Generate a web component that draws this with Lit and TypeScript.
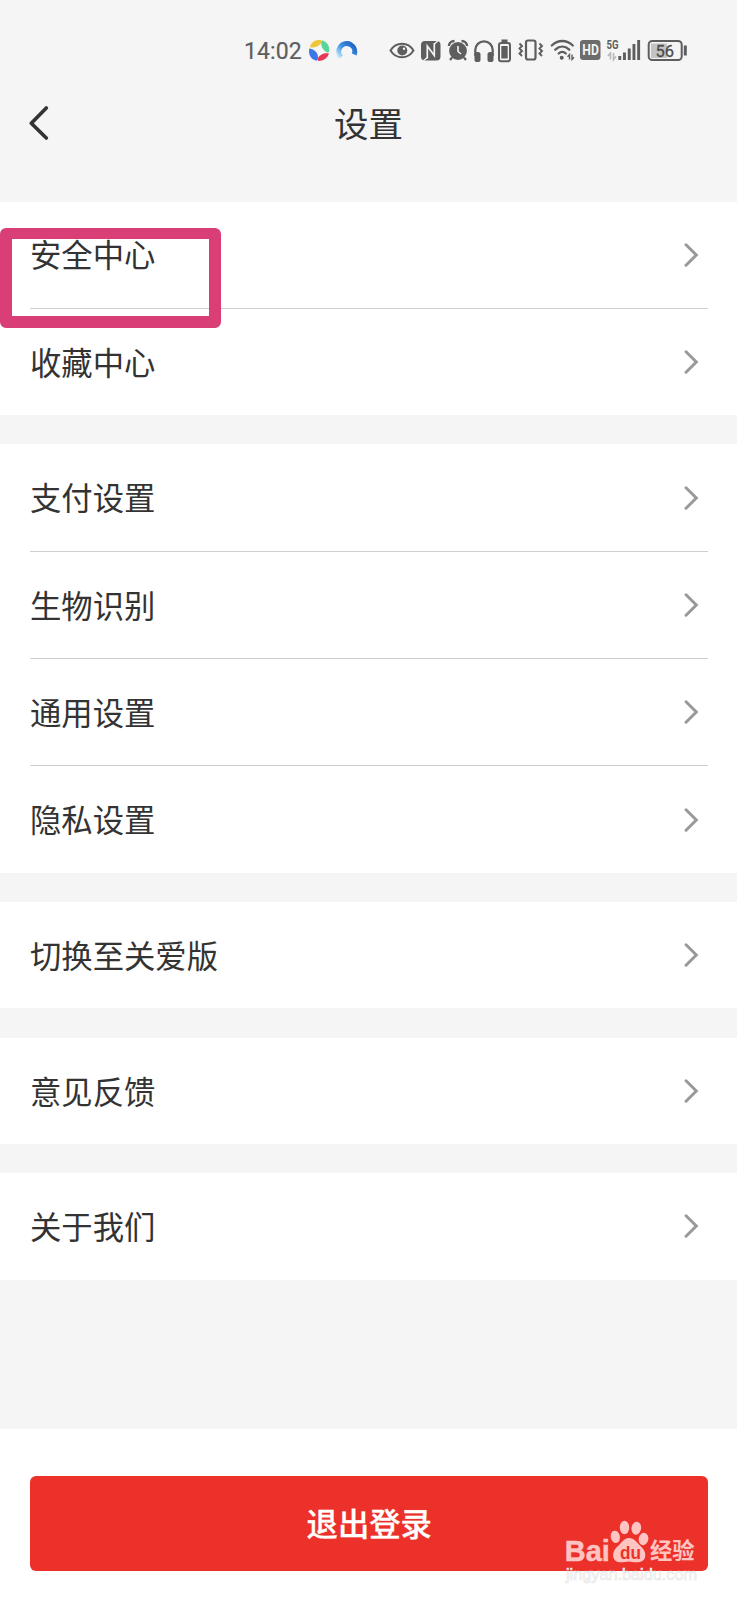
import { LitElement, html, css } from "lit";
import { customElement, property } from "lit/decorators.js";

@customElement("status-bar")
class StatusBar extends LitElement {
  static styles = css`
    :host {
      display: flex;
      box-sizing: border-box;
      height: 80px;
      padding: 30px 0 0 244px;
      color: #5e5e5e;
    }
    .time {
      width: 64px;
      font: 23px/43px Roboto, sans-serif;
      letter-spacing: 0.1px;
      -webkit-text-stroke: 0.2px #5e5e5e;
    }
    svg {
      display: block;
      flex: none;
    }
    .apps {
      margin-right: 20px;
    }
    text {
      font-family: Roboto, sans-serif;
    }
  `;
  render() {
    return html`
      <div class="time">14:02</div>
      <svg class="apps" width="52" height="45" viewBox="308 30 52 45" fill="none">
        <defs>
          <linearGradient id="ring" x1="1" y1="0.1" x2="0" y2="1">
            <stop offset="0" stop-color="#1f62c4" />
            <stop offset="0.5" stop-color="#3d92e2" />
            <stop offset="1" stop-color="#c4eafa" />
          </linearGradient>
        </defs>
        <path d="M310.300 45.500C312 41.300 316.500 39.300 321 40.100L321.600 42C319.500 46.500 314.500 48 310.300 47.500Z" fill="#efc53c" />
        <path d="M321.800 40.200C327 41.500 329.800 46 329.300 51.500L327.500 52.700C322.500 50.500 320 45 321.800 40.200Z" fill="#57d69a" />
        <path d="M329 53.500C327.500 58 323.500 61.200 318.300 60.900L317.300 59C319.500 54.500 324.500 52.500 329 53.500Z" fill="#e63958" />
        <path d="M309.300 48.500C308 54.500 311 59.500 316.500 60.700L317.700 59.500C319 54 315.500 49.500 309.300 48.500Z" fill="#3a78ea" />
        <path d="M341 57.200A8 8 0 1 1 354.200 54.500" stroke="url(#ring)" stroke-width="5" />
      </svg>
      <svg width="320" height="45" viewBox="380 30 320 45" fill="none" stroke="#5e5e5e" stroke-width="2">
        <path d="M390.500 50.500C396 41.500 408 41.500 413.500 50.500C408 59.500 396 59.500 390.500 50.500Z" />
        <circle cx="402.300" cy="50.500" r="5" fill="#5e5e5e" stroke="none" />
        <circle cx="404" cy="48.800" r="1.200" fill="#f5f5f5" stroke="none" />

        <rect x="421" y="41" width="19.500" height="19.500" rx="4" fill="#5e5e5e" stroke="none" />
        <path d="M427.300 58.500V46L434.300 55.500V43" stroke="#f5f5f5" stroke-width="1.700" />
        <path d="M427.300 57.500L423.500 60.700M434.300 44L438 40.800" stroke="#f5f5f5" stroke-width="1.300" />

        <circle cx="458" cy="51" r="8.900" fill="#5e5e5e" stroke="none" />
        <path d="M448.900 46C449 43.300 451.300 41 454.500 41M467.100 46C467 43.300 464.700 41 461.500 41" stroke-width="2.400" />
        <path d="M452 57.500L450 60M464 57.500L466 60" stroke-width="2.200" />
        <path d="M458 46V51.500L461 54" stroke="#f5f5f5" stroke-width="1.600" />

        <path d="M475.300 56V50A8.700 8.700 0 0 1 492.700 50V56" stroke-width="2.200" />
        <rect x="474.500" y="52" width="6" height="10" rx="2.600" fill="#5e5e5e" stroke="none" />
        <rect x="487.500" y="52" width="6" height="10" rx="2.600" fill="#5e5e5e" stroke="none" />

        <rect x="499" y="43" width="11" height="18.300" rx="2.200" />
        <rect x="501.500" y="39.500" width="6" height="3" fill="#5e5e5e" stroke="none" />
        <rect x="501.300" y="46" width="6.400" height="12.500" fill="#5e5e5e" stroke="none" />

        <rect x="526" y="40.500" width="9.500" height="19" rx="2" stroke-width="2.200" />
        <path d="M519.500 43.500L522 46L519.500 48.500L522 51L519.500 53.500L522 56M539.500 43.500L542 46L539.500 48.500L542 51L539.500 53.500L542 56" stroke-width="1.900" />

        <g stroke-linecap="round" stroke-width="2.300">
          <path d="M551.800 45.500C558 39.500 566.500 39.500 572.800 45.500" />
          <path d="M555.300 49.700C559.500 45.700 565 45.700 569.300 49.700" />
          <path d="M558.700 53.500C560.700 51.500 563.800 51.500 565.800 53.500" />
        </g>
        <circle cx="561.700" cy="57.800" r="2" fill="#5e5e5e" stroke="none" />
        <path d="M569.500 59.500V54.500L567.500 56.800M572 54.500V59.500L574 57.200" stroke-width="1.400" />

        <rect x="580" y="40" width="20.500" height="20" rx="3.200" fill="#6c6c6c" stroke="none" />
        <text x="582.300" y="55" font-size="14" font-weight="700" fill="#f5f5f5" stroke="none" textLength="16.500" lengthAdjust="spacingAndGlyphs">HD</text>

        <text x="606.500" y="48.500" font-size="12" font-weight="700" fill="#5e5e5e" stroke="none" textLength="12" lengthAdjust="spacingAndGlyphs">5G</text>
        <path d="M610.500 59.500V53L607.800 56M613.500 53V59.500L616 56.500" stroke="#b8b8b8" stroke-width="1.600" />
        <g fill="#5e5e5e" stroke="none">
          <rect x="618.300" y="56" width="2.900" height="4" />
          <rect x="623" y="52.500" width="2.900" height="7.500" />
          <rect x="627.800" y="48.500" width="2.900" height="11.500" />
          <rect x="632.500" y="44" width="2.900" height="16" />
          <rect x="637.200" y="40" width="2.900" height="20" />
        </g>

        <rect x="651" y="43.500" width="16" height="14.500" fill="#c4c4c4" stroke="none" />
        <rect x="648.700" y="41" width="33" height="19" rx="3.500" />
        <rect x="683.800" y="45.500" width="3" height="10" fill="#5e5e5e" stroke="none" />
        <text x="664.800" y="56.600" text-anchor="middle" font-size="16.500" fill="#4c4c4c" stroke="#4c4c4c" stroke-width="0.300">56</text>
      </svg>
    `;
  }
}

@customElement("settings-group")
class SettingsGroup extends LitElement {
  @property({ attribute: false }) items: string[] = [];
  static styles = css`
    :host {
      display: block;
      padding: 0 29.500px 0 30px;
      background: #fff;
    }
    .row {
      display: flex;
      align-items: center;
      justify-content: space-between;
      height: 106.350px;
      padding-right: 8.500px;
      font-size: 31.350px;
      line-height: 46px;
      color: #333;
    }
    .row + .row {
      border-top: 1px solid #cfcfcf;
    }
    span {
      padding-bottom: 0.400px;
    }
    svg {
      display: block;
      fill: none;
      stroke: #999;
      stroke-width: 3;
      stroke-linecap: round;
    }
  `;
  render() {
    return this.items.map(
      (label) => html`<div class="row">
        <span>${label}</span>
        <svg width="16" height="26" viewBox="0 0 16 26"><path d="M3 2.800L13.300 13L3 23.200" /></svg>
      </div>`
    );
  }
}

@customElement("app-root")
class AppRoot extends LitElement {
  static styles = css`
    :host {
      position: relative;
      display: flex;
      flex-direction: column;
      height: 1600px;
      overflow: hidden;
      background: #f5f5f5;
      font-family: "Noto Sans CJK SC", sans-serif;
    }
    header {
      display: grid;
      grid-template-columns: 60px 1fr 60px;
      align-items: center;
      height: 85px;
      padding-bottom: 36.500px;
    }
    header svg {
      margin-left: 28px;
      fill: none;
      stroke: #333;
      stroke-width: 3.700;
      stroke-linecap: round;
      stroke-linejoin: round;
    }
    h1 {
      margin: 0;
      padding-bottom: 2px;
      text-align: center;
      font-size: 34.500px;
      font-weight: 400;
      line-height: 50px;
      color: #333;
    }
    main {
      display: flex;
      flex-direction: column;
      gap: 29.250px;
    }
    footer {
      margin-top: auto;
      height: 171px;
      box-sizing: border-box;
      padding: 47px 29.500px 0 30px;
      background: #fff;
    }
    button {
      display: block;
      width: 100%;
      height: 95px;
      padding: 0 0 1px 1px;
      border: 0;
      border-radius: 6px;
      background: #ec312b;
      color: #fff;
      font: 500 31.350px/46px "Noto Sans CJK SC", sans-serif;
      -webkit-text-stroke: 0.300px #fff;
    }
    .highlight {
      position: absolute;
      left: 0;
      top: 228px;
      width: 221px;
      height: 99.700px;
      box-sizing: border-box;
      border: solid #d93f76;
      border-width: 11px 12px 12px 12px;
      border-radius: 6px;
    }
    .watermark {
      position: absolute;
      left: 560px;
      top: 1516px;
    }
  `;
  private groups = [
    ["安全中心", "收藏中心"],
    ["支付设置", "生物识别", "通用设置", "隐私设置"],
    ["切换至关爱版"],
    ["意见反馈"],
    ["关于我们"],
  ];
  render() {
    return html`
      <status-bar></status-bar>
      <header>
        <svg width="22" height="36" viewBox="28 105 22 36"><path d="M46.300 108L31.300 123.200L46.300 138" /></svg>
        <h1>设置</h1>
      </header>
      <main>${this.groups.map((g) => html`<settings-group .items=${g}></settings-group>`)}</main>
      <footer><button>退出登录</button></footer>
      <div class="highlight"></div>
      <svg class="watermark" width="150" height="74" viewBox="560 1516 150 74" fill="#ffc4c2">
        <text x="564.800" y="1561" font-family="Liberation Sans, sans-serif" font-weight="700" font-size="30" stroke="#ffc4c2" stroke-width="0.500" textLength="45" lengthAdjust="spacingAndGlyphs">Bai</text>
        <ellipse cx="615.300" cy="1536.800" rx="4.600" ry="6.200" transform="rotate(-12 615.300 1536.800)" />
        <ellipse cx="624.500" cy="1527.500" rx="4.700" ry="6.700" />
        <ellipse cx="636.300" cy="1528.200" rx="4.800" ry="6.500" transform="rotate(8 636.300 1528.200)" />
        <ellipse cx="643.500" cy="1539" rx="4.800" ry="6.200" transform="rotate(12 643.500 1539)" />
        <path d="M629 1538C634 1538 637 1542.500 640.500 1546C647 1551.500 647 1560.500 640 1562C635 1563 632 1561.500 629 1561.500C625 1561.500 622 1563 618 1562C611 1560 612 1550.500 618 1546C622 1542.500 624 1538 629 1538Z" />
        <text x="620" y="1558.500" font-family="Liberation Sans, sans-serif" font-weight="700" font-size="17.500" fill="#ec312b" textLength="21" lengthAdjust="spacingAndGlyphs">du</text>
        <text x="650" y="1559.300" font-family="Noto Sans CJK SC, sans-serif" font-weight="700" font-size="22.300">经验</text>
        <text x="566" y="1579.500" font-family="Liberation Sans, sans-serif" font-size="16.500" fill="#fff" stroke="#e6e6e6" stroke-width="0.700" textLength="131" lengthAdjust="spacingAndGlyphs">jingyan.baidu.com</text>
      </svg>
    `;
  }
}
